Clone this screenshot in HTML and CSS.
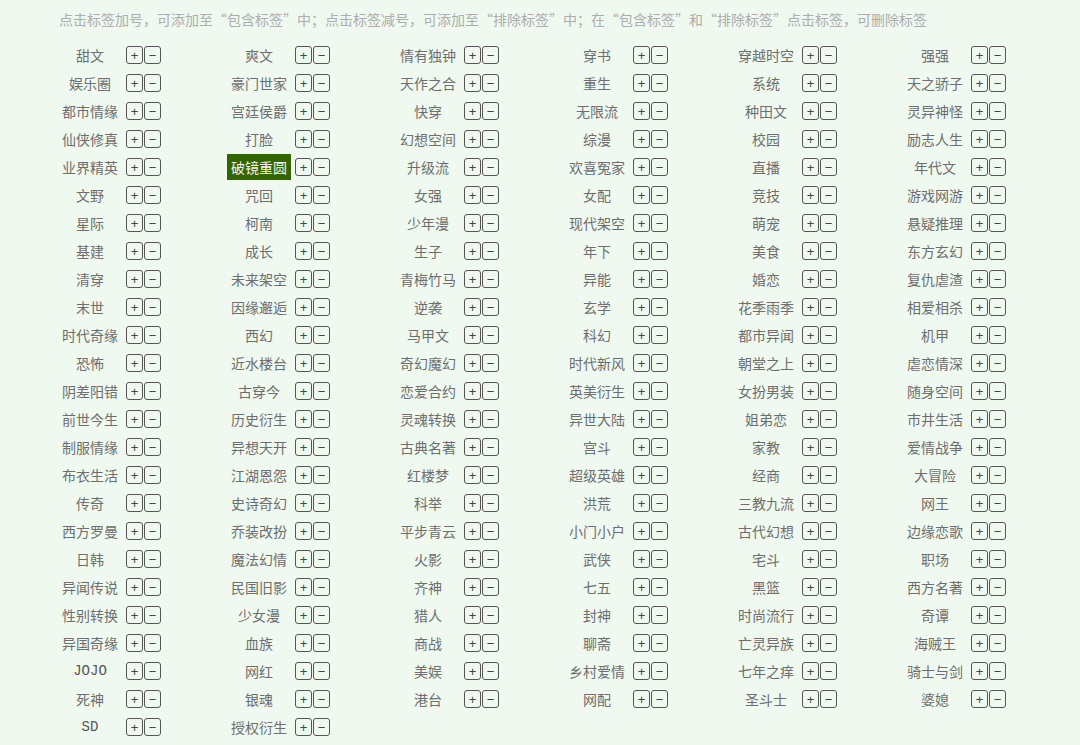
FILE: index.html
```html
<!DOCTYPE html>
<html lang="zh">
<head>
<meta charset="utf-8">
<title>标签</title>
<link rel="stylesheet" href="styles.css">
</head>
<body>
<div class="page">
<p class="tip">点击标签加号，可添加至“包含标签”中；点击标签减号，可添加至“排除标签”中；在“包含标签”和“排除标签”点击标签，可删除标签</p>
<div class="tags">
<div class="tag"><span class="name"><span class="txt">甜文</span></span><span class="btn">+</span><span class="btn">−</span></div>
<div class="tag"><span class="name"><span class="txt">爽文</span></span><span class="btn">+</span><span class="btn">−</span></div>
<div class="tag"><span class="name"><span class="txt">情有独钟</span></span><span class="btn">+</span><span class="btn">−</span></div>
<div class="tag"><span class="name"><span class="txt">穿书</span></span><span class="btn">+</span><span class="btn">−</span></div>
<div class="tag"><span class="name"><span class="txt">穿越时空</span></span><span class="btn">+</span><span class="btn">−</span></div>
<div class="tag"><span class="name"><span class="txt">强强</span></span><span class="btn">+</span><span class="btn">−</span></div>
<div class="tag"><span class="name"><span class="txt">娱乐圈</span></span><span class="btn">+</span><span class="btn">−</span></div>
<div class="tag"><span class="name"><span class="txt">豪门世家</span></span><span class="btn">+</span><span class="btn">−</span></div>
<div class="tag"><span class="name"><span class="txt">天作之合</span></span><span class="btn">+</span><span class="btn">−</span></div>
<div class="tag"><span class="name"><span class="txt">重生</span></span><span class="btn">+</span><span class="btn">−</span></div>
<div class="tag"><span class="name"><span class="txt">系统</span></span><span class="btn">+</span><span class="btn">−</span></div>
<div class="tag"><span class="name"><span class="txt">天之骄子</span></span><span class="btn">+</span><span class="btn">−</span></div>
<div class="tag"><span class="name"><span class="txt">都市情缘</span></span><span class="btn">+</span><span class="btn">−</span></div>
<div class="tag"><span class="name"><span class="txt">宫廷侯爵</span></span><span class="btn">+</span><span class="btn">−</span></div>
<div class="tag"><span class="name"><span class="txt">快穿</span></span><span class="btn">+</span><span class="btn">−</span></div>
<div class="tag"><span class="name"><span class="txt">无限流</span></span><span class="btn">+</span><span class="btn">−</span></div>
<div class="tag"><span class="name"><span class="txt">种田文</span></span><span class="btn">+</span><span class="btn">−</span></div>
<div class="tag"><span class="name"><span class="txt">灵异神怪</span></span><span class="btn">+</span><span class="btn">−</span></div>
<div class="tag"><span class="name"><span class="txt">仙侠修真</span></span><span class="btn">+</span><span class="btn">−</span></div>
<div class="tag"><span class="name"><span class="txt">打脸</span></span><span class="btn">+</span><span class="btn">−</span></div>
<div class="tag"><span class="name"><span class="txt">幻想空间</span></span><span class="btn">+</span><span class="btn">−</span></div>
<div class="tag"><span class="name"><span class="txt">综漫</span></span><span class="btn">+</span><span class="btn">−</span></div>
<div class="tag"><span class="name"><span class="txt">校园</span></span><span class="btn">+</span><span class="btn">−</span></div>
<div class="tag"><span class="name"><span class="txt">励志人生</span></span><span class="btn">+</span><span class="btn">−</span></div>
<div class="tag"><span class="name"><span class="txt">业界精英</span></span><span class="btn">+</span><span class="btn">−</span></div>
<div class="tag"><span class="name"><span class="txt active">破镜重圆</span></span><span class="btn">+</span><span class="btn">−</span></div>
<div class="tag"><span class="name"><span class="txt">升级流</span></span><span class="btn">+</span><span class="btn">−</span></div>
<div class="tag"><span class="name"><span class="txt">欢喜冤家</span></span><span class="btn">+</span><span class="btn">−</span></div>
<div class="tag"><span class="name"><span class="txt">直播</span></span><span class="btn">+</span><span class="btn">−</span></div>
<div class="tag"><span class="name"><span class="txt">年代文</span></span><span class="btn">+</span><span class="btn">−</span></div>
<div class="tag"><span class="name"><span class="txt">文野</span></span><span class="btn">+</span><span class="btn">−</span></div>
<div class="tag"><span class="name"><span class="txt">咒回</span></span><span class="btn">+</span><span class="btn">−</span></div>
<div class="tag"><span class="name"><span class="txt">女强</span></span><span class="btn">+</span><span class="btn">−</span></div>
<div class="tag"><span class="name"><span class="txt">女配</span></span><span class="btn">+</span><span class="btn">−</span></div>
<div class="tag"><span class="name"><span class="txt">竞技</span></span><span class="btn">+</span><span class="btn">−</span></div>
<div class="tag"><span class="name"><span class="txt">游戏网游</span></span><span class="btn">+</span><span class="btn">−</span></div>
<div class="tag"><span class="name"><span class="txt">星际</span></span><span class="btn">+</span><span class="btn">−</span></div>
<div class="tag"><span class="name"><span class="txt">柯南</span></span><span class="btn">+</span><span class="btn">−</span></div>
<div class="tag"><span class="name"><span class="txt">少年漫</span></span><span class="btn">+</span><span class="btn">−</span></div>
<div class="tag"><span class="name"><span class="txt">现代架空</span></span><span class="btn">+</span><span class="btn">−</span></div>
<div class="tag"><span class="name"><span class="txt">萌宠</span></span><span class="btn">+</span><span class="btn">−</span></div>
<div class="tag"><span class="name"><span class="txt">悬疑推理</span></span><span class="btn">+</span><span class="btn">−</span></div>
<div class="tag"><span class="name"><span class="txt">基建</span></span><span class="btn">+</span><span class="btn">−</span></div>
<div class="tag"><span class="name"><span class="txt">成长</span></span><span class="btn">+</span><span class="btn">−</span></div>
<div class="tag"><span class="name"><span class="txt">生子</span></span><span class="btn">+</span><span class="btn">−</span></div>
<div class="tag"><span class="name"><span class="txt">年下</span></span><span class="btn">+</span><span class="btn">−</span></div>
<div class="tag"><span class="name"><span class="txt">美食</span></span><span class="btn">+</span><span class="btn">−</span></div>
<div class="tag"><span class="name"><span class="txt">东方玄幻</span></span><span class="btn">+</span><span class="btn">−</span></div>
<div class="tag"><span class="name"><span class="txt">清穿</span></span><span class="btn">+</span><span class="btn">−</span></div>
<div class="tag"><span class="name"><span class="txt">未来架空</span></span><span class="btn">+</span><span class="btn">−</span></div>
<div class="tag"><span class="name"><span class="txt">青梅竹马</span></span><span class="btn">+</span><span class="btn">−</span></div>
<div class="tag"><span class="name"><span class="txt">异能</span></span><span class="btn">+</span><span class="btn">−</span></div>
<div class="tag"><span class="name"><span class="txt">婚恋</span></span><span class="btn">+</span><span class="btn">−</span></div>
<div class="tag"><span class="name"><span class="txt">复仇虐渣</span></span><span class="btn">+</span><span class="btn">−</span></div>
<div class="tag"><span class="name"><span class="txt">末世</span></span><span class="btn">+</span><span class="btn">−</span></div>
<div class="tag"><span class="name"><span class="txt">因缘邂逅</span></span><span class="btn">+</span><span class="btn">−</span></div>
<div class="tag"><span class="name"><span class="txt">逆袭</span></span><span class="btn">+</span><span class="btn">−</span></div>
<div class="tag"><span class="name"><span class="txt">玄学</span></span><span class="btn">+</span><span class="btn">−</span></div>
<div class="tag"><span class="name"><span class="txt">花季雨季</span></span><span class="btn">+</span><span class="btn">−</span></div>
<div class="tag"><span class="name"><span class="txt">相爱相杀</span></span><span class="btn">+</span><span class="btn">−</span></div>
<div class="tag"><span class="name"><span class="txt">时代奇缘</span></span><span class="btn">+</span><span class="btn">−</span></div>
<div class="tag"><span class="name"><span class="txt">西幻</span></span><span class="btn">+</span><span class="btn">−</span></div>
<div class="tag"><span class="name"><span class="txt">马甲文</span></span><span class="btn">+</span><span class="btn">−</span></div>
<div class="tag"><span class="name"><span class="txt">科幻</span></span><span class="btn">+</span><span class="btn">−</span></div>
<div class="tag"><span class="name"><span class="txt">都市异闻</span></span><span class="btn">+</span><span class="btn">−</span></div>
<div class="tag"><span class="name"><span class="txt">机甲</span></span><span class="btn">+</span><span class="btn">−</span></div>
<div class="tag"><span class="name"><span class="txt">恐怖</span></span><span class="btn">+</span><span class="btn">−</span></div>
<div class="tag"><span class="name"><span class="txt">近水楼台</span></span><span class="btn">+</span><span class="btn">−</span></div>
<div class="tag"><span class="name"><span class="txt">奇幻魔幻</span></span><span class="btn">+</span><span class="btn">−</span></div>
<div class="tag"><span class="name"><span class="txt">时代新风</span></span><span class="btn">+</span><span class="btn">−</span></div>
<div class="tag"><span class="name"><span class="txt">朝堂之上</span></span><span class="btn">+</span><span class="btn">−</span></div>
<div class="tag"><span class="name"><span class="txt">虐恋情深</span></span><span class="btn">+</span><span class="btn">−</span></div>
<div class="tag"><span class="name"><span class="txt">阴差阳错</span></span><span class="btn">+</span><span class="btn">−</span></div>
<div class="tag"><span class="name"><span class="txt">古穿今</span></span><span class="btn">+</span><span class="btn">−</span></div>
<div class="tag"><span class="name"><span class="txt">恋爱合约</span></span><span class="btn">+</span><span class="btn">−</span></div>
<div class="tag"><span class="name"><span class="txt">英美衍生</span></span><span class="btn">+</span><span class="btn">−</span></div>
<div class="tag"><span class="name"><span class="txt">女扮男装</span></span><span class="btn">+</span><span class="btn">−</span></div>
<div class="tag"><span class="name"><span class="txt">随身空间</span></span><span class="btn">+</span><span class="btn">−</span></div>
<div class="tag"><span class="name"><span class="txt">前世今生</span></span><span class="btn">+</span><span class="btn">−</span></div>
<div class="tag"><span class="name"><span class="txt">历史衍生</span></span><span class="btn">+</span><span class="btn">−</span></div>
<div class="tag"><span class="name"><span class="txt">灵魂转换</span></span><span class="btn">+</span><span class="btn">−</span></div>
<div class="tag"><span class="name"><span class="txt">异世大陆</span></span><span class="btn">+</span><span class="btn">−</span></div>
<div class="tag"><span class="name"><span class="txt">姐弟恋</span></span><span class="btn">+</span><span class="btn">−</span></div>
<div class="tag"><span class="name"><span class="txt">市井生活</span></span><span class="btn">+</span><span class="btn">−</span></div>
<div class="tag"><span class="name"><span class="txt">制服情缘</span></span><span class="btn">+</span><span class="btn">−</span></div>
<div class="tag"><span class="name"><span class="txt">异想天开</span></span><span class="btn">+</span><span class="btn">−</span></div>
<div class="tag"><span class="name"><span class="txt">古典名著</span></span><span class="btn">+</span><span class="btn">−</span></div>
<div class="tag"><span class="name"><span class="txt">宫斗</span></span><span class="btn">+</span><span class="btn">−</span></div>
<div class="tag"><span class="name"><span class="txt">家教</span></span><span class="btn">+</span><span class="btn">−</span></div>
<div class="tag"><span class="name"><span class="txt">爱情战争</span></span><span class="btn">+</span><span class="btn">−</span></div>
<div class="tag"><span class="name"><span class="txt">布衣生活</span></span><span class="btn">+</span><span class="btn">−</span></div>
<div class="tag"><span class="name"><span class="txt">江湖恩怨</span></span><span class="btn">+</span><span class="btn">−</span></div>
<div class="tag"><span class="name"><span class="txt">红楼梦</span></span><span class="btn">+</span><span class="btn">−</span></div>
<div class="tag"><span class="name"><span class="txt">超级英雄</span></span><span class="btn">+</span><span class="btn">−</span></div>
<div class="tag"><span class="name"><span class="txt">经商</span></span><span class="btn">+</span><span class="btn">−</span></div>
<div class="tag"><span class="name"><span class="txt">大冒险</span></span><span class="btn">+</span><span class="btn">−</span></div>
<div class="tag"><span class="name"><span class="txt">传奇</span></span><span class="btn">+</span><span class="btn">−</span></div>
<div class="tag"><span class="name"><span class="txt">史诗奇幻</span></span><span class="btn">+</span><span class="btn">−</span></div>
<div class="tag"><span class="name"><span class="txt">科举</span></span><span class="btn">+</span><span class="btn">−</span></div>
<div class="tag"><span class="name"><span class="txt">洪荒</span></span><span class="btn">+</span><span class="btn">−</span></div>
<div class="tag"><span class="name"><span class="txt">三教九流</span></span><span class="btn">+</span><span class="btn">−</span></div>
<div class="tag"><span class="name"><span class="txt">网王</span></span><span class="btn">+</span><span class="btn">−</span></div>
<div class="tag"><span class="name"><span class="txt">西方罗曼</span></span><span class="btn">+</span><span class="btn">−</span></div>
<div class="tag"><span class="name"><span class="txt">乔装改扮</span></span><span class="btn">+</span><span class="btn">−</span></div>
<div class="tag"><span class="name"><span class="txt">平步青云</span></span><span class="btn">+</span><span class="btn">−</span></div>
<div class="tag"><span class="name"><span class="txt">小门小户</span></span><span class="btn">+</span><span class="btn">−</span></div>
<div class="tag"><span class="name"><span class="txt">古代幻想</span></span><span class="btn">+</span><span class="btn">−</span></div>
<div class="tag"><span class="name"><span class="txt">边缘恋歌</span></span><span class="btn">+</span><span class="btn">−</span></div>
<div class="tag"><span class="name"><span class="txt">日韩</span></span><span class="btn">+</span><span class="btn">−</span></div>
<div class="tag"><span class="name"><span class="txt">魔法幻情</span></span><span class="btn">+</span><span class="btn">−</span></div>
<div class="tag"><span class="name"><span class="txt">火影</span></span><span class="btn">+</span><span class="btn">−</span></div>
<div class="tag"><span class="name"><span class="txt">武侠</span></span><span class="btn">+</span><span class="btn">−</span></div>
<div class="tag"><span class="name"><span class="txt">宅斗</span></span><span class="btn">+</span><span class="btn">−</span></div>
<div class="tag"><span class="name"><span class="txt">职场</span></span><span class="btn">+</span><span class="btn">−</span></div>
<div class="tag"><span class="name"><span class="txt">异闻传说</span></span><span class="btn">+</span><span class="btn">−</span></div>
<div class="tag"><span class="name"><span class="txt">民国旧影</span></span><span class="btn">+</span><span class="btn">−</span></div>
<div class="tag"><span class="name"><span class="txt">齐神</span></span><span class="btn">+</span><span class="btn">−</span></div>
<div class="tag"><span class="name"><span class="txt">七五</span></span><span class="btn">+</span><span class="btn">−</span></div>
<div class="tag"><span class="name"><span class="txt">黑篮</span></span><span class="btn">+</span><span class="btn">−</span></div>
<div class="tag"><span class="name"><span class="txt">西方名著</span></span><span class="btn">+</span><span class="btn">−</span></div>
<div class="tag"><span class="name"><span class="txt">性别转换</span></span><span class="btn">+</span><span class="btn">−</span></div>
<div class="tag"><span class="name"><span class="txt">少女漫</span></span><span class="btn">+</span><span class="btn">−</span></div>
<div class="tag"><span class="name"><span class="txt">猎人</span></span><span class="btn">+</span><span class="btn">−</span></div>
<div class="tag"><span class="name"><span class="txt">封神</span></span><span class="btn">+</span><span class="btn">−</span></div>
<div class="tag"><span class="name"><span class="txt">时尚流行</span></span><span class="btn">+</span><span class="btn">−</span></div>
<div class="tag"><span class="name"><span class="txt">奇谭</span></span><span class="btn">+</span><span class="btn">−</span></div>
<div class="tag"><span class="name"><span class="txt">异国奇缘</span></span><span class="btn">+</span><span class="btn">−</span></div>
<div class="tag"><span class="name"><span class="txt">血族</span></span><span class="btn">+</span><span class="btn">−</span></div>
<div class="tag"><span class="name"><span class="txt">商战</span></span><span class="btn">+</span><span class="btn">−</span></div>
<div class="tag"><span class="name"><span class="txt">聊斋</span></span><span class="btn">+</span><span class="btn">−</span></div>
<div class="tag"><span class="name"><span class="txt">亡灵异族</span></span><span class="btn">+</span><span class="btn">−</span></div>
<div class="tag"><span class="name"><span class="txt">海贼王</span></span><span class="btn">+</span><span class="btn">−</span></div>
<div class="tag"><span class="name"><span class="txt latin">JOJO</span></span><span class="btn">+</span><span class="btn">−</span></div>
<div class="tag"><span class="name"><span class="txt">网红</span></span><span class="btn">+</span><span class="btn">−</span></div>
<div class="tag"><span class="name"><span class="txt">美娱</span></span><span class="btn">+</span><span class="btn">−</span></div>
<div class="tag"><span class="name"><span class="txt">乡村爱情</span></span><span class="btn">+</span><span class="btn">−</span></div>
<div class="tag"><span class="name"><span class="txt">七年之痒</span></span><span class="btn">+</span><span class="btn">−</span></div>
<div class="tag"><span class="name"><span class="txt">骑士与剑</span></span><span class="btn">+</span><span class="btn">−</span></div>
<div class="tag"><span class="name"><span class="txt">死神</span></span><span class="btn">+</span><span class="btn">−</span></div>
<div class="tag"><span class="name"><span class="txt">银魂</span></span><span class="btn">+</span><span class="btn">−</span></div>
<div class="tag"><span class="name"><span class="txt">港台</span></span><span class="btn">+</span><span class="btn">−</span></div>
<div class="tag"><span class="name"><span class="txt">网配</span></span><span class="btn">+</span><span class="btn">−</span></div>
<div class="tag"><span class="name"><span class="txt">圣斗士</span></span><span class="btn">+</span><span class="btn">−</span></div>
<div class="tag"><span class="name"><span class="txt">婆媳</span></span><span class="btn">+</span><span class="btn">−</span></div>
<div class="tag"><span class="name"><span class="txt latin">SD</span></span><span class="btn">+</span><span class="btn">−</span></div>
<div class="tag"><span class="name"><span class="txt">授权衍生</span></span><span class="btn">+</span><span class="btn">−</span></div>
</div>
</div>
</body>
</html>
```
FILE: styles.css
```css
html, body {
  margin: 0;
  padding: 0;
  background: #eff9ef;
}
body {
  font-family: "Noto Sans CJK SC", "Noto Sans", sans-serif;
  font-size: 14px;
  color: #6e6e6e;
}
.page {
  padding: 5px 0 0 0;
}
.tip {
  margin: 0;
  padding-left: 59px;
  height: 28px;
  line-height: 28px;
  color: #adadad;
  font-size: 14px;
  white-space: nowrap;
}
.tags {
  display: grid;
  grid-template-columns: repeat(6, 169px);
  grid-auto-rows: 28px;
  margin: 8px 0 0 55px;
}
.tag {
  display: flex;
  align-items: center;
}
.name {
  width: 70px;
  margin-right: 1px;
  display: flex;
  justify-content: center;
  align-items: center;
}
.txt {
  display: inline-block;
  height: 26px;
  line-height: 26px;
  padding: 0 4px;
  white-space: nowrap;
}
.txt.active {
  background: #336600;
  color: #f4f4f4;
}
.txt.latin {
  font-family: "Liberation Mono", monospace;
  color: #555;
}
.btn {
  box-sizing: border-box;
  width: 17px;
  height: 18px;
  margin-right: 1px;
  border: 1.5px solid #555;
  border-radius: 3px;
  display: flex;
  align-items: center;
  justify-content: center;
  font-family: "Liberation Sans", sans-serif;
  font-size: 13px;
  line-height: 1;
  color: #444;
}
```
